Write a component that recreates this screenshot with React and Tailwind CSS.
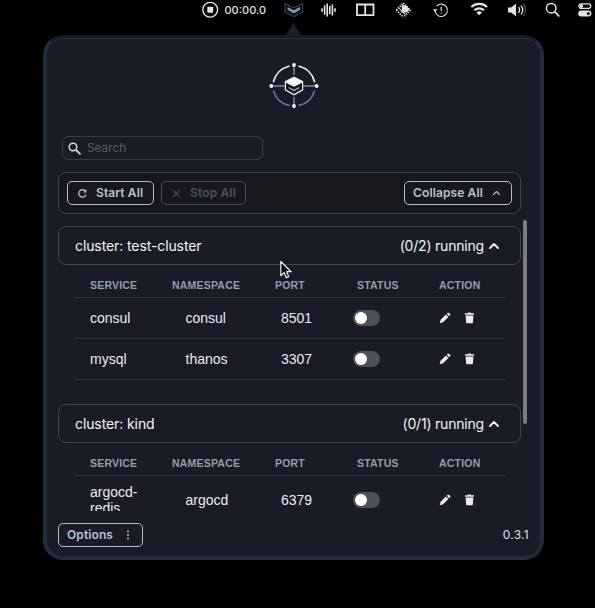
const clusters = [
  {
    name: 'test-cluster',
    running: '(0/2) running',
    rows: [
      { service: 'consul', namespace: 'consul', port: '8501' },
      { service: 'mysql', namespace: 'thanos', port: '3307' },
    ],
  },
  {
    name: 'kind',
    running: '(0/1) running',
    rows: [{ service: 'argocd-redis', namespace: 'argocd', port: '6379' }],
  },
]

function MenuBar() {
  return (
    <div className="flex h-[35px] shrink-0 items-start text-[#e4e4e4]">
      <svg className="ml-[202px] mt-[1px] shrink-0" width="17" height="17" viewBox="0 0 17 17">
        <circle cx="8.2" cy="8.7" r="7.4" fill="none" stroke="currentColor" strokeWidth="1.3" />
        <rect x="5.3" y="5.8" width="5.9" height="5.9" rx="1" fill="currentColor" />
      </svg>
      <span className="ml-[5.5px] mt-[3px] w-[43px] whitespace-nowrap font-['Inter',sans-serif] text-[11px] font-medium leading-[14px]">00:00.0</span>
      <svg className="ml-[16px] mt-[2px] shrink-0" width="20" height="16" viewBox="0 0 20 16">
        <path d="M1 1.6 L9.8 5.8 L18.6 1.6 V10 L9.8 14.8 L1 10 Z" fill="#0b0e14" stroke="#343e50" strokeWidth="1.2" />
        <path d="M3.6 5 L9.8 8.3 L16 5 V7.8 L9.8 11.4 L3.6 7.8 Z" fill="#8998b1" />
      </svg>
      <svg className="ml-[17.5px] mt-[2px] shrink-0" width="15" height="16" viewBox="0 0 15 16">
        <path d="M1 6.2v3.6 M3.6 3.2v9.6 M6.2 1.4v13.2 M8.8 4v8 M11.4 2.6v10.8 M14 6.2v3.6" stroke="currentColor" strokeWidth="1.6" />
      </svg>
      <svg className="ml-[20px] mt-[3px] shrink-0" width="19" height="14" viewBox="0 0 19 14">
        <path d="M1 1.5h16.5v10.6H1z M9.2 1.5v10.6" fill="none" stroke="currentColor" strokeWidth="1.8" />
      </svg>
      <svg className="ml-[20px] mt-[2px] shrink-0" width="17" height="17" viewBox="0 0 17 17">
        <path d="M1.4 8.2L8 14.8 M8.2 1.2L15.4 8.2 M15.4 8.2L8.4 15.2 M1.4 8L7.6 1.8" stroke="currentColor" strokeWidth="1.8" strokeDasharray="1.3 1.1" />
        <path d="M6.6 3.2h4.6l3.2 4.4-2.6 3H5.6l1.4-2.2z" fill="currentColor" />
        <path d="M4.2 6.4l6 6" stroke="currentColor" strokeWidth="1.1" />
      </svg>
      <svg className="ml-[21px] mt-[2px] shrink-0" width="16" height="16" viewBox="0 0 16 16">
        <path d="M2 8.5a6.2 6.2 0 1 0 1.6-4.4" fill="none" stroke="currentColor" strokeWidth="1.1" />
        <path d="M0 7.3h4.2L2.1 10z" fill="currentColor" />
        <path d="M8.2 4.8v4.3 M8.2 10.4v1.2" stroke="currentColor" strokeWidth="1.2" />
      </svg>
      <svg className="ml-[21px] mt-[2px] shrink-0" width="19" height="14" viewBox="0 0 19 14">
        <path d="M1.3 5.1a11.4 11.4 0 0 1 15.8 0" fill="none" stroke="currentColor" strokeWidth="2.1" />
        <path d="M4.4 8.3a7 7 0 0 1 9.6 0" fill="none" stroke="currentColor" strokeWidth="2.1" />
        <path d="M9.2 13.3L6.4 10.5a4 4 0 0 1 5.6 0z" fill="currentColor" />
      </svg>
      <svg className="ml-[18px] mt-[2px] shrink-0" width="21" height="16" viewBox="0 0 21 16">
        <path d="M1 5.5h3L9 1.8v12.4L4 10.5H1z" fill="currentColor" />
        <path d="M11.5 5.2a4.4 4.4 0 0 1 0 5.6" fill="none" stroke="currentColor" strokeWidth="1.3" />
        <path d="M14 3.6a7 7 0 0 1 0 8.8" fill="none" stroke="currentColor" strokeWidth="1.3" />
        <path d="M16.5 2a10 10 0 0 1 0 12" fill="none" stroke="#555" strokeWidth="1.3" />
      </svg>
      <svg className="ml-[17px] mt-[2px] shrink-0" width="15" height="15" viewBox="0 0 15 15">
        <circle cx="6.2" cy="6.2" r="4.8" fill="none" stroke="currentColor" strokeWidth="1.5" />
        <path d="M9.8 9.8l4 4" stroke="currentColor" strokeWidth="1.7" strokeLinecap="round" />
      </svg>
      <svg className="ml-[18px] mt-[3px] shrink-0" width="14" height="14" viewBox="0 0 14 14">
        <rect x="0.8" y="0.8" width="12" height="4.6" rx="2.3" fill="none" stroke="currentColor" strokeWidth="1.2" />
        <circle cx="3.4" cy="3.1" r="1.8" fill="currentColor" />
        <rect x="0.2" y="7.6" width="13.2" height="6" rx="3" fill="currentColor" />
        <circle cx="10.4" cy="10.6" r="1.5" fill="#111" />
      </svg>
    </div>
  )
}

function Logo() {
  return (
    <svg className="mx-auto mt-[23px] block shrink-0" width="52" height="48" viewBox="0 0 52 48">
      <g fill="none" strokeWidth="1.7" strokeLinecap="round">
        <path d="M5.5 19.5A21 21 0 0 1 20.8 4.2 M31.2 4.2A21 21 0 0 1 46.5 19.5" stroke="#eef1f4" />
        <path d="M5.5 29A21 21 0 0 0 20.8 43.3 M31.2 43.3A21 21 0 0 0 46.5 29" stroke="#5878a4" />
      </g>
      <path d="M26 3v10 M26 35v9 M4 24h12.5 M35.5 24h12.5" stroke="#b9bfc8" strokeWidth="1" />
      <g fill="#f5f7f9">
        <circle cx="26" cy="3" r="1.9" />
        <circle cx="26" cy="44" r="1.9" />
        <circle cx="3.3" cy="24" r="1.9" />
        <circle cx="48.7" cy="24" r="1.9" />
        <path d="M26 14.5l9.2 4.8v9L26 33.4l-9.2-5.1v-9z" />
      </g>
      <path d="M18 20.7l8 4.1 8-4.1v6.9l-8 4.4-8-4.4z" fill="#10151f" />
      <path d="M20.5 24.7l5.5 2.9 5.5-2.9v1.6L26 29.4l-5.5-3.1z" fill="#7f9dc7" />
    </svg>
  )
}

function Chevron({ className, weight }) {
  return (
    <svg className={className} viewBox="0 0 12 8">
      <path d="M2 6l4-4 4 4" fill="none" stroke="currentColor" strokeWidth={weight} strokeLinecap="round" strokeLinejoin="round" />
    </svg>
  )
}

function ServiceRow({ row }) {
  return (
    <div className="grid min-h-[41px] grid-cols-[82px_103px_82px_82px_82px] items-center border-b border-[#2b333f] py-2 text-[14px] leading-4 text-[#e8eaed]">
      <div className="pl-4 pr-3">{row.service}</div>
      <div className="pl-[29.5px]">{row.namespace}</div>
      <div className="pl-[22px]">{row.port}</div>
      <div className="pl-3">
        <div className="flex h-4 w-[27px] items-center rounded-full bg-[#4d5059] px-[2px]">
          <div className="size-3 rounded-full bg-white" />
        </div>
      </div>
      <div className="flex items-center gap-[12.5px] pl-4">
        <svg width="12" height="12" viewBox="0 0 12 12" fill="#ececec">
          <path d="M.8 11.2l.8-3.4 5.3-5.2 2.5 2.5-5.3 5.2zM7.7 1.8l.9-.8c.5-.5 1.2-.5 1.7 0l.7.7c.5.5.5 1.2 0 1.7l-.8.9z" />
        </svg>
        <svg width="11" height="12" viewBox="0 0 11 12" fill="#ececec">
          <path d="M1 1.3h2.8L4.4.6h2.2l.6.7H10v1.4H1zM1.6 3.4h7.8l-.5 6.9c0 .6-.5 1-1.1 1H3.2c-.6 0-1.1-.4-1.1-1z" />
        </svg>
      </div>
    </div>
  )
}

function Cluster({ cluster }) {
  return (
    <section className="mb-6 w-[463px]">
      <div className="flex h-[39px] items-center rounded-[8px] border border-[#3a4555] pl-4 pr-[20px] font-['Inter',sans-serif] text-[14px] text-[#f2f4f6]">
        <span className="tracking-[-0.1px]">cluster: {cluster.name}</span>
        <span className="ml-auto tracking-[-0.2px]">{cluster.running}</span>
        <Chevron className="ml-1 h-[8px] w-[12px]" weight={1.8} />
      </div>
      <div className="mx-4">
        <div className="grid h-[33px] grid-cols-[82px_103px_82px_82px_82px] items-center border-b border-[#2b333f] pt-[9px] text-[10.5px] font-bold tracking-[0.2px] text-[#929dad]">
          {['SERVICE', 'NAMESPACE', 'PORT', 'STATUS', 'ACTION'].map((h) => (
            <div key={h} className="pl-4">{h}</div>
          ))}
        </div>
        {cluster.rows.map((r) => <ServiceRow key={r.service} row={r} />)}
      </div>
    </section>
  )
}

export default function App() {
  return (
    <div className="relative flex h-[608px] w-[595px] flex-col overflow-hidden bg-black font-['Liberation_Sans',sans-serif]">
      <MenuBar />
      <svg className="absolute left-[285px] top-[23px]" width="17" height="13" viewBox="0 0 17 13">
        <path d="M0 13L8.5 0 17 13z" fill="#191e2a" />
      </svg>
      <main className="ml-[43px] flex h-[525px] w-[501px] flex-col rounded-[20px] border-4 border-t-[3px] border-[#222b39] border-t-[#151a24] bg-[#191c27]">
        <div className="flex min-h-0 flex-1 flex-col rounded-t-[16px] border-t border-[#253041]">
          <Logo />
          <div className="ml-[15px] mt-[26px] flex h-[24px] w-[201px] shrink-0 items-center rounded-[6px] border border-[#363c48] pl-[5px] font-['Inter',sans-serif] text-[12px] text-[#565b66]">
            <svg width="13" height="13" viewBox="0 0 13 13" className="mr-[6px] text-[#d5dae2]">
              <circle cx="5" cy="5" r="3.8" fill="none" stroke="currentColor" strokeWidth="1.5" />
              <path d="M7.9 7.9l4 4" stroke="currentColor" strokeWidth="1.8" strokeLinecap="round" />
            </svg>
            <span className="tracking-[-0.1px]">Search</span>
          </div>
          <div className="ml-[11px] mt-3 flex h-[42px] w-[463px] shrink-0 items-center rounded-[8px] border border-[#3a4555] bg-[#16181d] px-2 font-['Inter',sans-serif] text-[12px] font-semibold">
            <div className="flex h-6 w-[87px] items-center rounded-[5px] border border-[#b0bdd0] pl-[9px] text-[#b6c1d2]">
              <svg width="11" height="11" viewBox="0 0 11 11" className="mr-[8px]">
                <path d="M8.6 3.4A3.7 3.7 0 1 0 9.1 6.3" fill="none" stroke="currentColor" strokeWidth="1.3" />
                <path d="M9.4 1.2v3.3H6.2z" fill="currentColor" />
              </svg>
              <span className="tracking-[0.1px]">Start All</span>
            </div>
            <div className="ml-[7px] flex h-6 w-[85px] items-center rounded-[5px] border border-[#474f5c] pl-[10px] text-[#4b525f]">
              <svg width="9" height="9" viewBox="0 0 9 9" className="mr-[9px]">
                <path d="M1.2 1.2l6.6 6.6 M7.8 1.2l-6.6 6.6" stroke="currentColor" strokeWidth="1.2" />
              </svg>
              <span className="tracking-[0.15px]">Stop All</span>
            </div>
            <div className="ml-auto flex h-6 w-[108px] items-center rounded-[5px] border border-[#b0bdd0] pl-2 text-[#b6c1d2]">
              <span className="tracking-[0.12px]">Collapse All</span>
              <Chevron className="ml-[9px] h-[6px] w-[9px]" weight={1.5} />
            </div>
          </div>
          <div className="ml-[11px] mt-[6px] flex h-[291px] shrink-0 overflow-hidden">
            <div className="pt-[6px]">
              {clusters.map((c) => <Cluster key={c.name} cluster={c} />)}
            </div>
            <div className="ml-[2px] h-[204px] w-1 rounded-full bg-[#7b7c80]" />
          </div>
          <footer className="mt-3 flex h-6 shrink-0 items-center justify-between pl-[11px] pr-[11px] font-['Inter',sans-serif] text-[12px]">
            <div className="flex h-6 w-[85px] items-center rounded-[5px] border border-[#b0bdd0] pl-[8px] font-semibold text-[#b6c1d2]">
              <span className="tracking-[0.1px]">Options</span>
              <svg width="4" height="10" viewBox="0 0 4 10" className="ml-[13px]" fill="currentColor">
                <circle cx="2" cy="1.5" r="1" />
                <circle cx="2" cy="5" r="1" />
                <circle cx="2" cy="8.5" r="1" />
              </svg>
            </div>
            <span className="tracking-[0.3px] text-[#dce1e8]">0.3.1</span>
          </footer>
        </div>
      </main>
      <svg className="absolute left-[279px] top-[260px]" width="14" height="20" viewBox="0 0 14 20">
        <path d="M1.8 1.5v14.2l3.3-3.1 2.1 5 2.5-1-2.1-4.9h4.5z" fill="#08090c" stroke="#eee" strokeWidth="1.2" strokeLinejoin="round" />
      </svg>
    </div>
  )
}
